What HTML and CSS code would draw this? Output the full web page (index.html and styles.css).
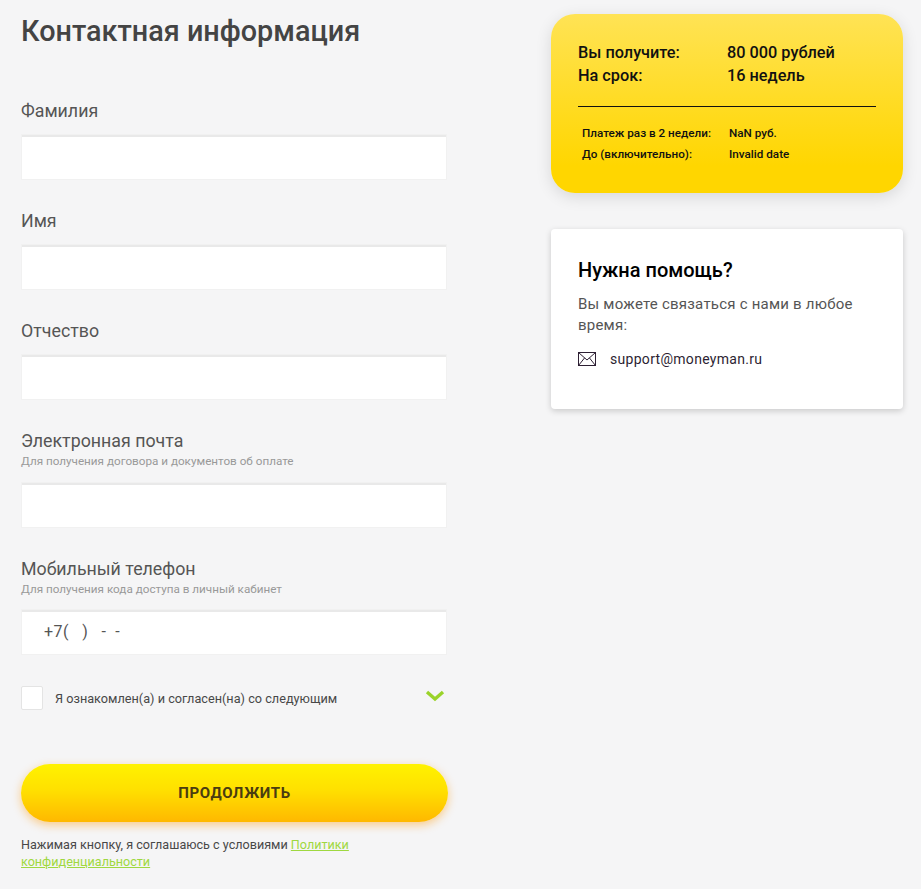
FILE: index.html
```html
<!DOCTYPE html>
<html lang="en">
<head>
    <meta charset="UTF-8">
    <meta name="viewport" content="width=device-width, initial-scale=1.0">
    <title>Контактная информация</title>
    <link rel="stylesheet" href="styles.css">
</head>
<body>
    <div class="page">
        <form class="contact-form">
            <h1>Контактная информация</h1>

            <div class="field">
                <label class="field-label">Фамилия</label>
                <input class="field-input" type="text">
            </div>
            <div class="field">
                <label class="field-label">Имя</label>
                <input class="field-input" type="text">
            </div>
            <div class="field">
                <label class="field-label">Отчество</label>
                <input class="field-input" type="text">
            </div>
            <div class="field">
                <label class="field-label">Электронная почта</label>
                <div class="field-hint">Для получения договора и документов об оплате</div>
                <input class="field-input" type="text">
            </div>
            <div class="field">
                <label class="field-label">Мобильный телефон</label>
                <div class="field-hint">Для получения кода доступа в личный кабинет</div>
                <input class="field-input" type="text" value="+7(   )   -  -">
            </div>

            <div class="agree">
                <span class="agree-box"></span>
                <span class="agree-text">Я ознакомлен(а) и согласен(на) со следующим</span>
                <svg class="agree-arrow" width="20" height="12" viewBox="0 0 20 12">
                    <path d="M2 2 L10 9 L18 2" fill="none" stroke="#9ad32a" stroke-width="3.4"/>
                </svg>
            </div>

            <button class="submit" type="button">ПРОДОЛЖИТЬ</button>

            <p class="policy">Нажимая кнопку, я соглашаюсь с условиями <a href="#">Политики конфиденциальности</a></p>
        </form>

        <aside class="sidebar">
            <div class="summary">
                <div class="summary-main">
                    <div class="summary-row"><span class="summary-key">Вы получите:</span><span>80 000 рублей</span></div>
                    <div class="summary-row"><span class="summary-key">На срок:</span><span>16 недель</span></div>
                </div>
                <div class="summary-sub">
                    <div class="summary-row"><span class="summary-key">Платеж раз в 2 недели:</span><span>NaN руб.</span></div>
                    <div class="summary-row"><span class="summary-key">До (включительно):</span><span>Invalid date</span></div>
                </div>
            </div>

            <div class="help">
                <h2>Нужна помощь?</h2>
                <p>Вы можете связаться с нами в любое время:</p>
                <div class="help-mail">
                    <svg width="18" height="14" viewBox="0 0 18 14">
                        <rect x="0.5" y="0.5" width="17" height="13" fill="none" stroke="#2d1f33"/>
                        <path d="M0.5 0.5 L9 8 L17.5 0.5 M0.5 13.5 L6.6 5.9 M17.5 13.5 L11.4 5.9" fill="none" stroke="#2d1f33"/>
                    </svg>
                    <span>support@moneyman.ru</span>
                </div>
            </div>
        </aside>
    </div>
</body>
</html>
```

FILE: styles.css
```css
* {
    box-sizing: border-box;
}

body {
    font-family: Roboto, sans-serif;
    margin: 0;
    background-color: #f5f5f6;
    color: #484848;
}

.page {
    display: flex;
    align-items: flex-start;
    padding: 14px 18px 0 21px;
    gap: 103px;
}

.contact-form {
    width: 427px;
    flex-shrink: 0;
}

h1 {
    margin: 0 0 51px;
    font-size: 28.8px;
    line-height: 34px;
    font-weight: 500;
    color: #444;
}

.field {
    margin-bottom: 30px;
}

.field-label {
    display: block;
    font-size: 17.8px;
    line-height: 24px;
    margin-bottom: 12px;
    color: #555;
}

.field-hint {
    font-size: 11.7px;
    line-height: 13.6px;
    color: #999;
    margin: -10px 0 14px;
}

.field-input {
    display: block;
    width: 424px;
    height: 44px;
    margin-left: 1px;
    padding: 0 22px 3px;
    border: none;
    border-top: 2px solid #e9e9e9;
    background: white;
    box-shadow: 0 0 0 1px #f1f1f1;
    font-family: inherit;
    font-size: 16px;
    letter-spacing: 0.45px;
    color: #555;
}

.agree {
    display: flex;
    align-items: center;
    margin-top: 32px;
    height: 24px;
}

.agree-box {
    width: 22px;
    height: 24px;
    background: white;
    border: 1px solid #e4e4e4;
    border-radius: 2px;
    flex-shrink: 0;
}

.agree-text {
    margin-left: 12px;
    font-size: 12.7px;
    color: #484848;
    flex-grow: 1;
}

.agree-arrow {
    margin: -5px 3px 0 0;
}

.submit {
    display: block;
    width: 427px;
    height: 58px;
    margin-top: 54px;
    padding-bottom: 2px;
    border: none;
    border-radius: 29px;
    background: linear-gradient(to bottom, #fff200 0%, #ffe000 45%, #ffb800 100%);
    box-shadow: 0 3px 10px rgba(255, 150, 0, 0.45);
    font-family: inherit;
    font-size: 15px;
    font-weight: 700;
    letter-spacing: 0.6px;
    color: #4a3c10;
}

.policy {
    margin: 15px 0 0;
    font-size: 12.6px;
    line-height: 16.5px;
    color: #484848;
}

.policy a {
    color: #9fd840;
}

.sidebar {
    width: 352px;
    flex-shrink: 0;
}

.summary {
    height: 179px;
    padding: 27px 27px 0;
    border-radius: 24px;
    background: linear-gradient(to bottom, #ffe355 0%, #ffd600 85%);
    box-shadow: 0 4px 16px rgba(0, 0, 0, 0.12);
    color: #111;
}

.summary-row {
    display: flex;
}

.summary-main {
    padding-bottom: 19px;
    border-bottom: 1px solid #111;
    font-size: 16.3px;
    line-height: 23px;
    font-weight: 500;
}

.summary-main .summary-key {
    width: 149px;
}

.summary-sub {
    padding: 16px 0 0 4px;
    font-size: 11.7px;
    line-height: 21px;
    font-weight: 500;
}

.summary-sub .summary-key {
    width: 147px;
}

.help {
    height: 180px;
    margin-top: 36px;
    padding: 28px 27px 0;
    background: white;
    border-radius: 4px;
    box-shadow: 0 2px 6px rgba(0, 0, 0, 0.18);
}

.help h2 {
    margin: 0 0 11px;
    font-size: 20px;
    line-height: 26px;
    font-weight: 500;
    color: #000;
}

.help p {
    margin: 0 0 13px;
    font-size: 15px;
    line-height: 21px;
    font-weight: 400;
    letter-spacing: 0.22px;
    color: #555;
}

.help-mail {
    display: flex;
    align-items: center;
    gap: 14px;
    font-size: 14px;
    line-height: 20px;
    font-weight: 400;
    letter-spacing: 0.3px;
    color: #2d1f33;
}
```
